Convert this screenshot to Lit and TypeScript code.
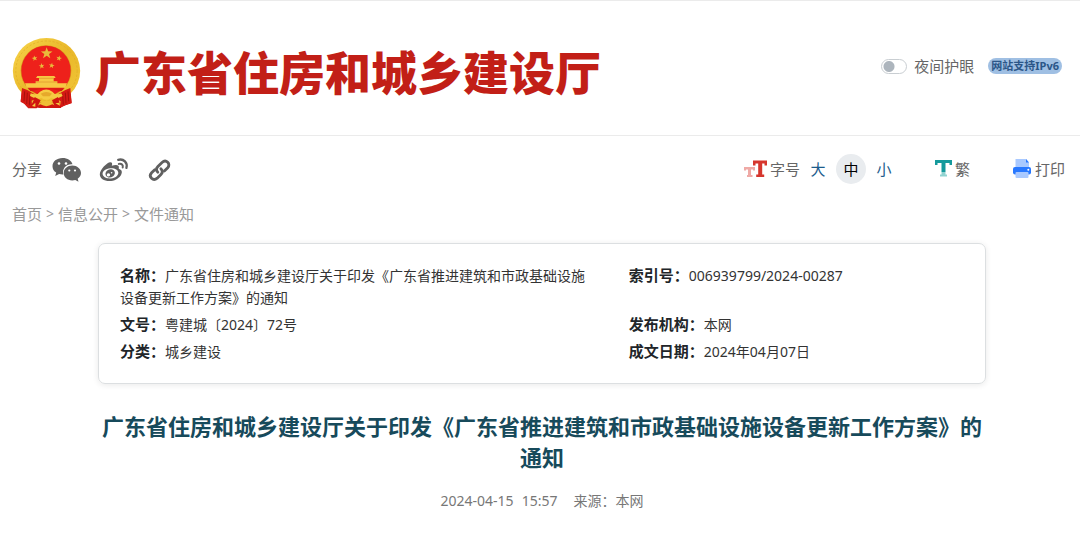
import { LitElement, html, css } from "lit";
import { customElement, state } from "lit/decorators.js";

const STAR = "M0-10 2.4-3.2 9.5-3.1 3.8 1.2 5.9 8.1 0 4 -5.9 8.1 -3.8 1.2 -9.5-3.1 -2.4-3.2Z";

@customElement("site-emblem")
class SiteEmblem extends LitElement {
  static styles = css`
    :host { display: block; }
    svg { display: block; width: 70px; height: 72px; }
  `;
  render() {
    return html`<svg viewBox="36 33 210 216" aria-hidden="true">
      <defs>
        <linearGradient id="gold" x1="0" y1="0" x2="1" y2="1">
          <stop offset="0" stop-color="#f8d64c"/><stop offset=".5" stop-color="#e9b829"/><stop offset="1" stop-color="#f3c739"/>
        </linearGradient>
      </defs>
      <path d="M66 188 62 226 74 235 84 246 104 244 120 246H160L178 246 196 238 215 232 210 188Z" fill="#cf1712"/>
      <ellipse cx="139.500" cy="134" rx="101" ry="98" fill="url(#gold)"/>
      <ellipse cx="139.500" cy="134" rx="92" ry="89" fill="none" stroke="#e0ab26" stroke-width="2" stroke-dasharray="7 5"/>
      <ellipse cx="138" cy="134" rx="76" ry="76" fill="#d9941c"/>
      <ellipse cx="138" cy="134" rx="74" ry="75" fill="#ee211b"/>
      <path d="M66 186 82 192 104 205 111 222 100 246 82 242 72 232 62 228Z M211 186 196 192 174 205 167 222 178 246 196 238 206 234 215 230Z" fill="#d61a14"/>
      <path d="M74 196 72 226M82 200 80 234M90 206 88 238M204 196 206 226M196 200 198 232M188 206 190 236" stroke="#9d0f0c" stroke-width="2.500"/>
      <g fill="#e9bb3b">
        <path transform="translate(140 82) scale(1.850)" d=${STAR}/>
        <path transform="translate(104 97) scale(.9) rotate(-12)" d=${STAR}/>
        <path transform="translate(177 97) scale(.9) rotate(12)" d=${STAR}/>
        <path transform="translate(125 120) scale(.9) rotate(-8)" d=${STAR}/>
        <path transform="translate(155 119) scale(.9) rotate(8)" d=${STAR}/>
      </g>
      <path d="M112 150H163L167 156H161V166H172V172H201L196 185H80L75 172H107V166H117V156H108Z" fill="#f7c843"/>
      <path d="M117 157H161M107 168H172" stroke="#df922a" stroke-width="2"/>
      <path d="M83 187H194L184 196Q162 188 139 188T92 196Z" fill="#d91b14"/>
      <path d="M92 202Q112 210 120 197Q139 184 157 197Q166 210 184 202L188 210Q166 222 154 215Q139 228 124 215Q112 222 90 210Z" fill="#f5cb42"/>
      <path d="M122 203Q139 193 156 203L149 211H129Z" fill="#e6a92b"/>
      <path d="M95 224Q108 216 121 230Q139 218 157 230Q170 216 182 226L180 240Q164 242 157 235Q139 246 121 235Q110 243 96 238Z" fill="#efbd35"/>
      <path d="M104 213 122 223 110 247H84Q98 236 104 213ZM174 213 156 223 166 246H184Q178 232 174 213Z" fill="#d01510"/>
      <path d="M106 230 96 240 106 242ZM166 232 178 230 180 239Z" fill="#f5cb42"/>
    </svg>`;
  }
}

@customElement("site-header")
class SiteHeader extends LitElement {
  static styles = css`
    :host {
      display: flex;
      align-items: center;
      justify-content: space-between;
      height: 134px;
      padding: 0 18px 0 12px;
      border-top: 1px solid #ebebeb;
      border-bottom: 1px solid #ebebeb;
    }
    .brand { display: flex; align-items: center; gap: 13px; padding-top: 10px; }
    h1 {
      margin: 0;
      padding-bottom: 6px;
      font: 900 46px/60px "Noto Sans CJK SC", sans-serif;
      color: #c21f17;
      white-space: nowrap;
    }
    .tools {
      display: flex;
      align-items: center;
      gap: 14px;
      padding-bottom: 4px;
      color: #666;
      font-size: 15px;
      line-height: 20px;
      white-space: nowrap;
    }
    .night { display: flex; align-items: center; gap: 7px; }
    .switch {
      appearance: none;
      box-sizing: border-box;
      width: 26px;
      height: 15px;
      margin: 0;
      border: 1px solid #c9ced2;
      border-radius: 8px;
      background: radial-gradient(circle at 7px 50%, #adb5bd 5px, transparent 6px) #fff;
    }
    .switch:checked { background: radial-gradient(circle at 17px 50%, #adb5bd 5px, transparent 6px) #fff; }
    .badge {
      padding: 0 3px;
      border-radius: 8px;
      background: #9fbfe3;
      color: #2b5688;
      font-size: 11px;
      font-weight: 700;
      line-height: 16px;
    }
  `;
  render() {
    return html`
      <div class="brand"><site-emblem></site-emblem><h1>广东省住房和城乡建设厅</h1></div>
      <div class="tools">
        <label class="night"><input class="switch" type="checkbox" role="switch" />夜间护眼</label>
        <span class="badge">网站支持IPv6</span>
      </div>`;
  }
}

@customElement("page-toolbar")
class PageToolbar extends LitElement {
  @state() size = "中";

  static styles = css`
    :host {
      display: flex;
      align-items: center;
      justify-content: space-between;
      padding: 18px 15px 0 12px;
      color: #666;
      font-size: 15px;
      line-height: 30px;
      white-space: nowrap;
    }
    .share, .tools, .sizes, .tool { display: flex; align-items: center; }
    .share { gap: 17px; }
    .share svg { padding-top: 2px; }
    .first { display: flex; align-items: center; gap: 10px; }
    .tools { gap: 36px; }
    .tool { gap: 3px; }
    .print { padding-left: 6px; }
    .sizes { gap: 3px; }
    a { color: inherit; text-decoration: none; }
    svg { display: block; }
    button {
      width: 30px;
      height: 30px;
      padding: 0;
      border: 0;
      border-radius: 50%;
      background: none;
      color: #1c5c8c;
      font: inherit;
    }
    button.active { background: #e9ecef; color: #000; }
  `;

  render() {
    return html`
      <div class="share">
        <div class="first">
          <span>分享</span>
          <a href="#wechat" aria-label="微信">
            <svg width="30" height="28" viewBox="0 1 30 28" fill="#606060">
              <path d="M10.500 3C4.700 3 .5 6.600 .5 11.200c0 2.700 1.400 4.900 3.700 6.400L3.200 21l3.900-2c1.200.3 2.200.5 3.400.5h.9C9.700 14.200 14 9.300 19.700 9.300h.8C19.600 5.500 15.500 3 10.500 3Z"/>
              <path d="M20.300 10.600c-4.900 0-8.600 3.300-8.600 7.400s3.700 7.400 8.600 7.400c1 0 2-.2 3-.5l3.200 1.800-.8-3c2-1.400 3.300-3.400 3.300-5.700 0-4.100-4-7.400-8.700-7.400Z"/>
              <g fill="#fff"><circle cx="7" cy="8.500" r="1.300"/><circle cx="14" cy="8.500" r="1.300"/><circle cx="17.300" cy="15.500" r="1.100"/><circle cx="23" cy="15.500" r="1.100"/></g>
            </svg>
          </a>
        </div>
        <a href="#weibo" aria-label="微博">
          <svg width="30" height="28" viewBox="0 1 30 28" fill="none" stroke="#606060">
            <path fill="#606060" stroke="none" fill-rule="evenodd" d="M11.400 7.200c1.900.1 2.100 1.600 1.400 3.600 3.200-1.300 7.900-1.700 7 2.300-.2.800.2 1 .9 1.200 5.500 2-.1 11.800-10.200 11.800C4.800 26.100.8 23.400.8 19.300c0-4.600 7.400-12.300 10.600-12.100Zm-.2 6c-4.500.4-7.800 3-7.600 5.900.3 2.900 3.900 4.800 8.300 4.400 4.400-.4 7.700-3.100 7.400-6-.3-2.900-3.700-4.700-8.100-4.300Z"/>
            <path fill="#606060" stroke="none" fill-rule="evenodd" d="M12.200 14.200c2.700.3 4.300 2.500 3.500 4.900-.8 2.600-3.900 4.100-6.500 3.300-2.500-.8-3.400-3.100-2.300-5.300.9-1.800 3.100-3.100 5.300-2.900Zm-2.800 4a1.700 1.700 0 1 0 .1 3.400 1.700 1.700 0 0 0-.1-3.400Zm3.200-1.200a.8.8 0 1 0 0 1.600.8.8 0 0 0 0-1.600Z"/>
            <path d="M19.200 4.800c5.500-1.500 9.700 3 8.200 8.100" stroke-width="2.300" stroke-linecap="round"/>
            <path d="M19.800 8.900c2.800-.7 4.600 1.200 3.900 3.700" stroke-width="2" stroke-linecap="round"/>
          </svg>
        </a>
        <a href="#link" aria-label="复制链接">
          <svg width="28" height="28" viewBox="-1 -1 32 32" fill="none" stroke="#606060" stroke-width="3.200" stroke-linecap="round">
            <path d="M12.500 17.500C10.300 15.300 10.800 12.700 12.600 10.900L17.300 6.400C21.900 2.200 27.900 7.900 23.800 12.400L20 16.200"/>
            <path d="M16 13.500C18.200 15.700 17.900 18.300 16.100 20.100L11.800 24.300C7.200 28.400 1.200 22.700 5.400 18.200L9 14.700"/>
          </svg>
        </a>
      </div>
      <div class="tools">
        <div class="sizes">
          <span class="tool">
            <svg width="23" height="20" viewBox="0 0 23 20">
              <path fill="#efaaa6" d="M0 8h11v3.500H9V10.500H7V16h1.500v2h-5.500v-2h1V10.500H2v1H0Z"/>
              <path fill="#d6362d" d="M9 1.500H23v5h-2.500V4.500H18.200V15.500h2V18h-8v-2.500h2V4.500H11.500v2H9Z"/>
            </svg>字号</span>
          ${["大", "中", "小"].map(
            (s) => html`<button class=${s === this.size ? "active" : ""} @click=${() => (this.size = s)}>${s}</button>`,
          )}
        </div>
        <a class="tool" href="#traditional">
          <svg width="17" height="20" viewBox="0 0 17 20">
            <path fill="#159a9c" d="M0 1h17v5h-2.500V4h-4v9h-4V4h-4v2H0Z"/>
            <path fill="#91d3d1" d="M6.500 13h4v2.500H12v2H5v-2h1.500Z"/>
          </svg>繁</a>
        <a class="tool print" href="#print">
          <svg width="20" height="20" viewBox="0 0 20 20">
            <path fill="#a9c9ff" d="M3.500 0H14l3 3.500V9H3.500Z"/><path fill="#2878ff" d="M14 0v3.500h3Z"/>
            <rect y="8" x="1" width="18" height="7.500" rx="2" fill="#2878ff"/>
            <rect x="3.500" y="13" width="13" height="6" rx="1" fill="#a9c9ff"/>
            <circle cx="16.300" cy="10.800" r="1" fill="#fff"/>
          </svg>打印</a>
      </div>`;
  }
}

@customElement("app-root")
class AppRoot extends LitElement {
  static styles = css`
    :host {
      display: block;
      background: #fff;
      font-family: "Noto Sans", "Noto Sans CJK SC", sans-serif;
      color: #212529;
    }
    .crumbs { display: flex; gap: 4px; padding: 19px 12px 0; color: #999; font-size: 14px; line-height: 22px; }
    .crumbs a { color: inherit; font-size: 15px; text-decoration: none; }
    .content { margin: 18px 94px 0 98px; }
    .card {
      display: grid;
      grid-template-columns: 3fr 2fr;
      gap: 4px 6px;
      margin: 0;
      padding: 20px 21px;
      border: 1px solid #dcdfe1;
      border-radius: 7px;
      box-shadow: 0 1px 6px rgba(0, 0, 0, 0.09);
      font-size: 14px;
      line-height: 22px;
    }
    .item { padding-right: 32px; }
    dt { display: inline; font-size: 15px; font-weight: 700; }
    dd { display: inline; margin: 0; color: #333; }
    h2 {
      margin: 27px 0 0;
      color: #174a5b;
      font-size: 22px;
      font-weight: 700;
      line-height: 31px;
      text-align: center;
    }
    .meta { display: flex; justify-content: center; gap: 16px; margin: 17px 0 0; color: #777; font-size: 14px; line-height: 22px; }
    .when { display: flex; gap: 8px; }
  `;

  rows = [
    ["名称", "广东省住房和城乡建设厅关于印发《广东省推进建筑和市政基础设施设备更新工作方案》的通知"],
    ["索引号", "006939799/2024-00287"],
    ["文号", "粤建城〔2024〕72号"],
    ["发布机构", "本网"],
    ["分类", "城乡建设"],
    ["成文日期", "2024年04月07日"],
  ];

  render() {
    return html`
      <site-header></site-header>
      <page-toolbar></page-toolbar>
      <nav class="crumbs">
        <a href="#home">首页</a><span>&gt;</span><a href="#info">信息公开</a><span>&gt;</span><a href="#notice">文件通知</a>
      </nav>
      <main class="content">
        <dl class="card">
          ${this.rows.map(([k, v]) => html`<div class="item"><dt>${k}：</dt><dd>${v}</dd></div>`)}
        </dl>
        <h2>广东省住房和城乡建设厅关于印发《广东省推进建筑和市政基础设施设备更新工作方案》的通知</h2>
        <p class="meta"><span class="when"><span>2024-04-15</span><span>15:57</span></span><span>来源：本网</span></p>
      </main>`;
  }
}
